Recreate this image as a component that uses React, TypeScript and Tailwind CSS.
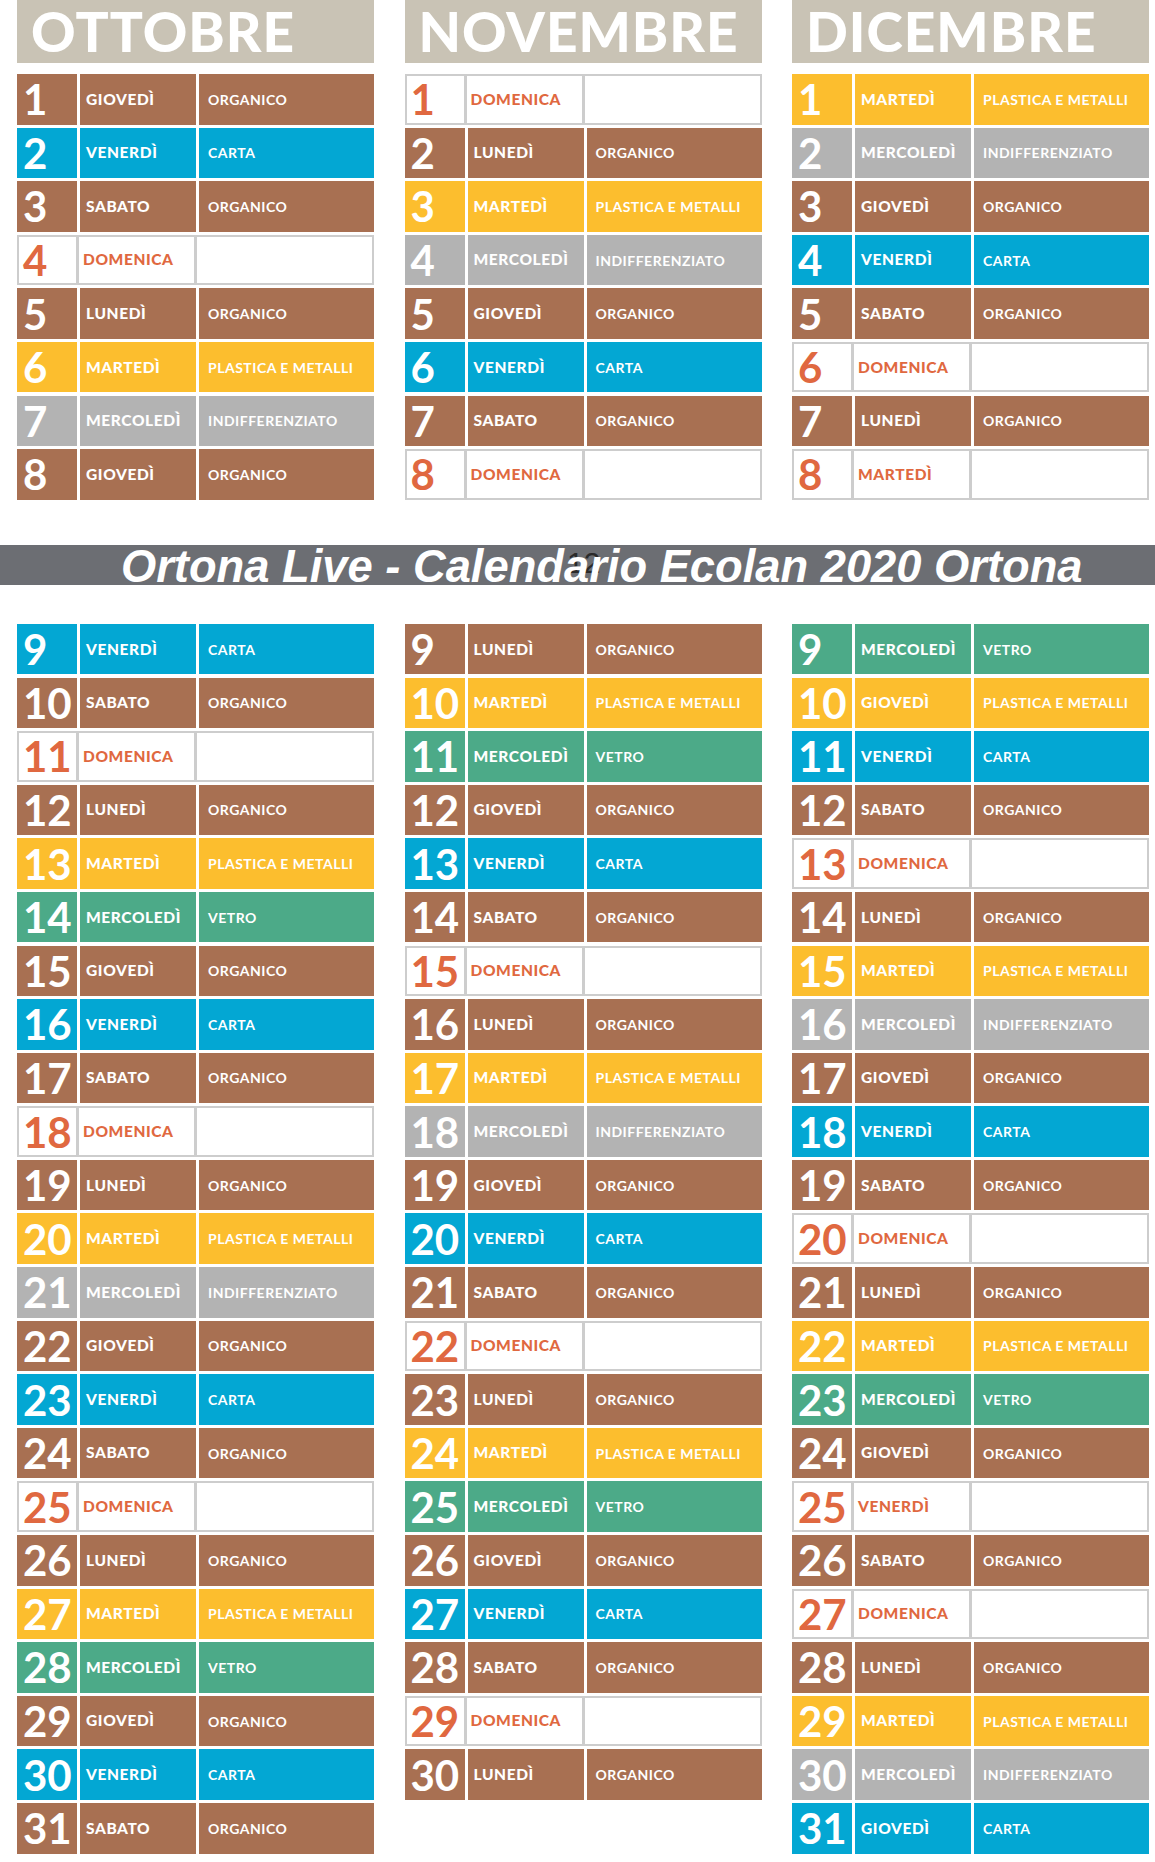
import React from "react";

type Code = "O" | "C" | "P" | "I" | "V" | "-";

interface Month {
  name: string;
  start: number; // 0 = lunedì
  types: string;
}

const WEEKDAYS = ["LUNEDÌ", "MARTEDÌ", "MERCOLEDÌ", "GIOVEDÌ", "VENERDÌ", "SABATO", "DOMENICA"];

const LABELS: Record<Code, string> = {
  O: "ORGANICO",
  C: "CARTA",
  P: "PLASTICA E METALLI",
  I: "INDIFFERENZIATO",
  V: "VETRO",
  "-": "",
};

const BG: Record<Code, string> = {
  O: "bg-[#a87052]",
  C: "bg-[#03a7d3]",
  P: "bg-[#fcbe2e]",
  I: "bg-[#b3b3b3]",
  V: "bg-[#4caa88]",
  "-": "bg-white",
};

const MONTHS: Month[] = [
  { name: "OTTOBRE", start: 3, types: "OCO-OPIOCO-OPVOCO-OPIOCO-OPVOCO" },
  { name: "NOVEMBRE", start: 6, types: "-OPIOCO-OPVOCO-OPIOCO-OPVOCO-O" },
  { name: "DICEMBRE", start: 1, types: "PIOCO-O-VPCO-OPIOCO-OPVO-O-OPIC" },
];

const DayRow: React.FC<{ n: number; day: string; code: Code }> = ({ n, day, code }) => {
  if (code === "-") {
    return (
      <div className="flex h-[50.5px] gap-[3px] bg-[#cdcdcd] p-[2px]">
        <div className="w-[57px] bg-white flex items-center pl-[4px] text-[42px] font-bold leading-none text-[#e06840]">
          {n}
        </div>
        <div className="w-[115px] bg-white flex items-center pl-[4px] text-[15.5px] font-black tracking-[0.6px] text-[#e06840]">
          {day}
        </div>
        <div className="flex-1 bg-white" />
      </div>
    );
  }
  const bg = BG[code];
  return (
    <div className="flex h-[50.5px] gap-[3px] text-white">
      <div className={`w-[60px] ${bg} flex items-center pl-[6px] text-[42px] font-bold leading-none`}>{n}</div>
      <div className={`w-[116px] ${bg} flex items-center pl-[6px] text-[15.5px] font-black tracking-[0.6px]`}>
        {day}
      </div>
      <div className={`flex-1 ${bg} flex items-center pl-[9px] text-[14px] font-bold tracking-[0.5px]`}>
        {LABELS[code]}
      </div>
    </div>
  );
};

function rowsOf(m: Month, from: number, to: number) {
  const out = [];
  for (let d = from; d <= Math.min(to, m.types.length); d++) {
    const code = m.types[d - 1] as Code;
    const day = WEEKDAYS[(m.start + d - 1) % 7];
    out.push(<DayRow key={d} n={d} day={day} code={code} />);
  }
  return out;
}

export default function App() {
  return (
    <div className="w-[1155px] h-[1862px] bg-white overflow-hidden font-['Lato',sans-serif]">
      <div className="flex gap-[30.5px] pl-[17px]">
        {MONTHS.map((m) => (
          <div key={m.name} className="w-[357px] flex flex-col">
            <div className="h-[63px] bg-[#c9c3b5] flex items-center pl-[14px] text-[55px] font-black leading-[63px] tracking-[1px] text-white">
              {m.name}
            </div>
            <div className="mt-[11px] flex flex-col gap-[3.1px]">{rowsOf(m, 1, 8)}</div>
          </div>
        ))}
      </div>

      <div className="relative mt-[45.3px] h-[40px] bg-[#6c6e73]">
        <span className="absolute left-[567px] top-[3px] text-[30px] leading-none text-[#2a2a2a] font-['Liberation_Sans',sans-serif]">
          12
        </span>
        <div className="relative pl-[121px] whitespace-nowrap text-[45.3px] leading-[44px] font-bold italic text-white font-['Liberation_Sans',Arial,sans-serif]">
          Ortona Live - Calendario Ecolan 2020 Ortona
        </div>
      </div>

      <div className="mt-[39px] flex gap-[30.5px] pl-[17px] items-start">
        {MONTHS.map((m) => (
          <div key={m.name} className="w-[357px] flex flex-col gap-[3.1px]">
            {rowsOf(m, 9, 31)}
          </div>
        ))}
      </div>
    </div>
  );
}
